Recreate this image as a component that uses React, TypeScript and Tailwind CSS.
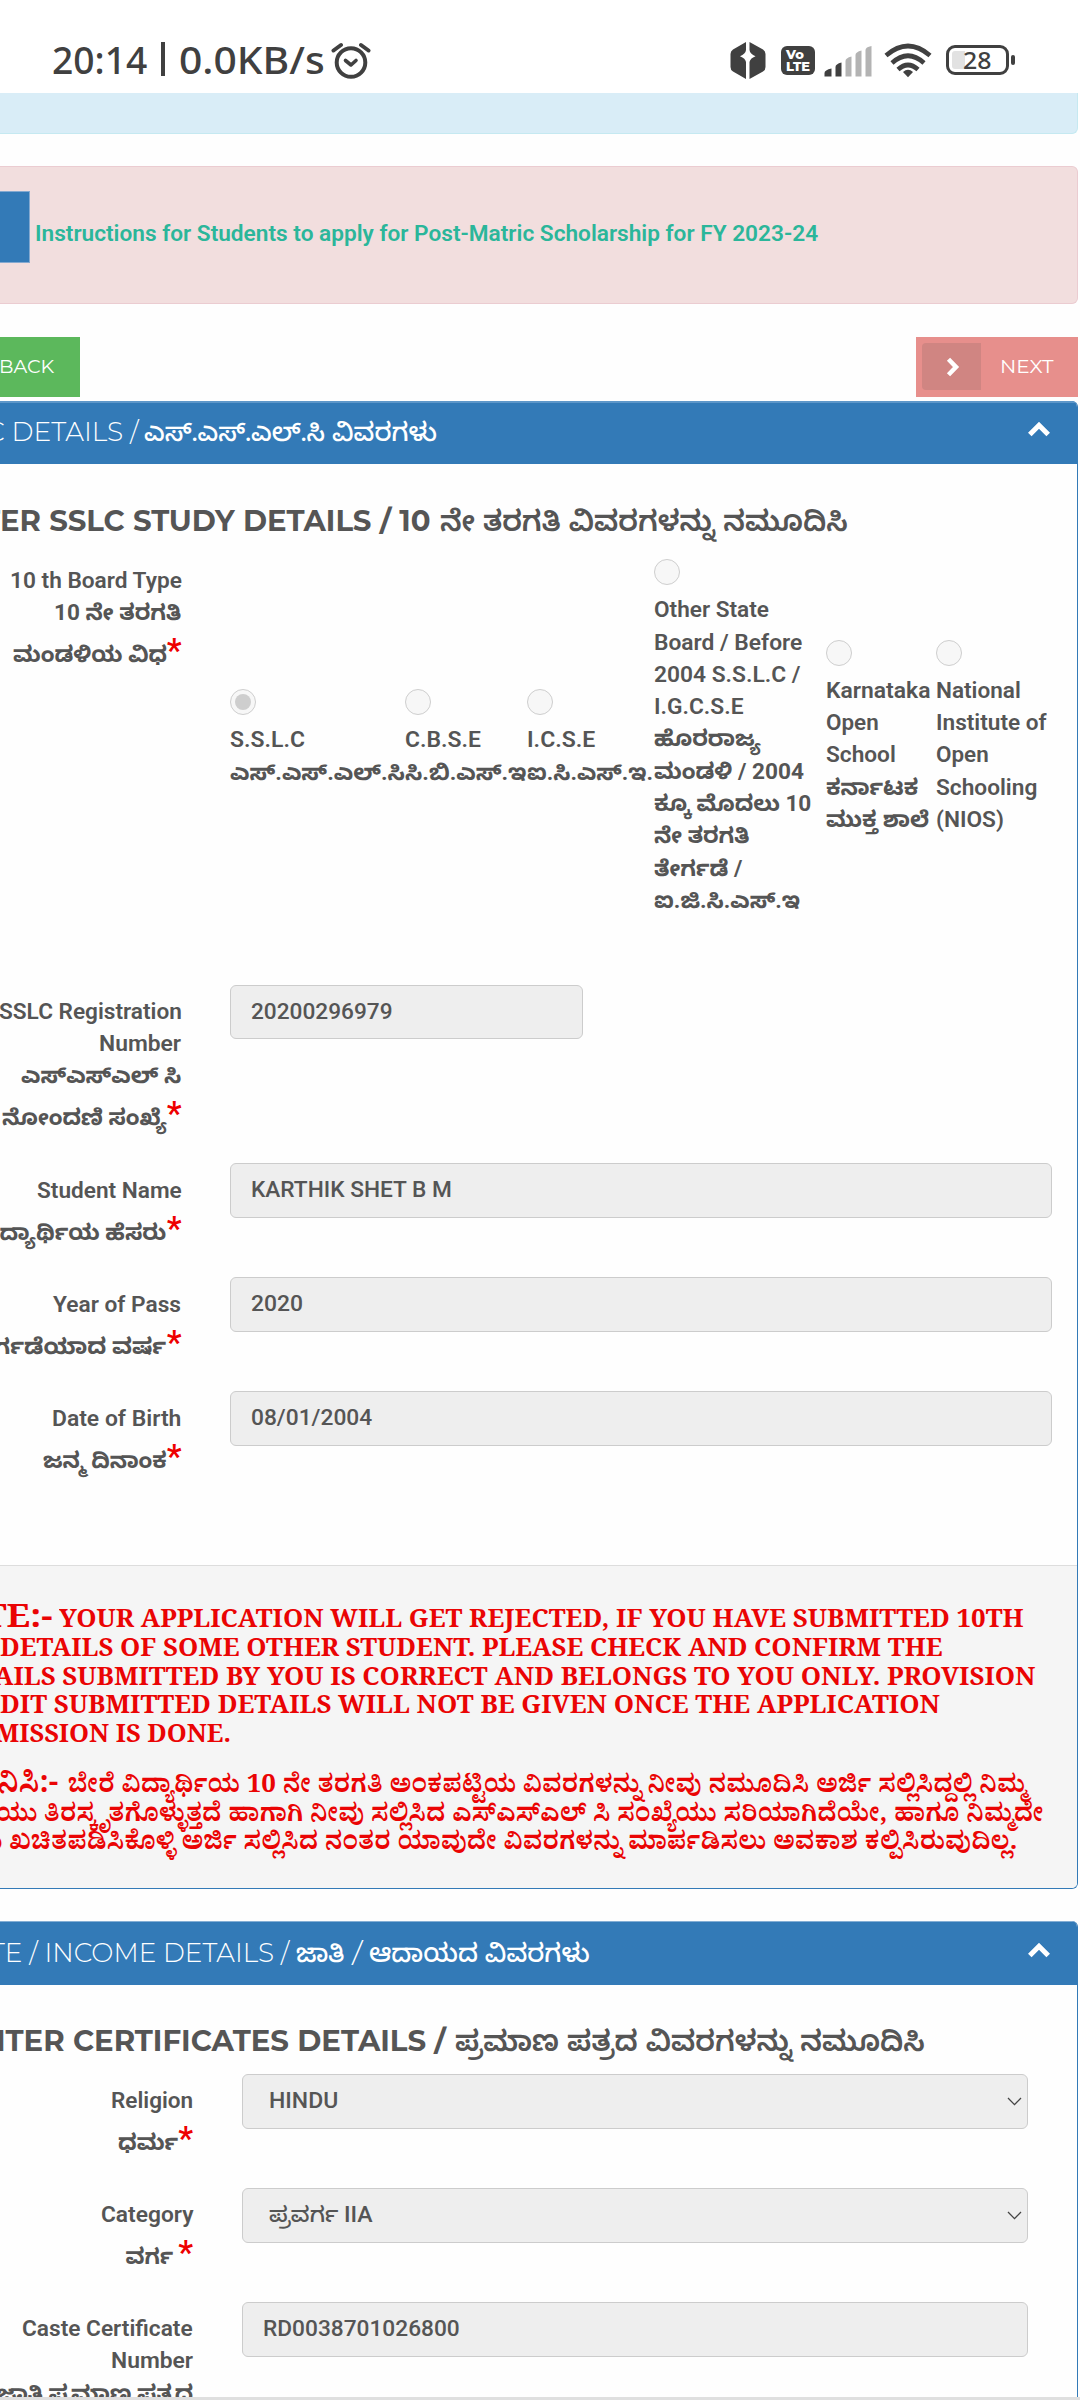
import { useLayoutEffect, useRef, useState } from 'react';
import type { ReactNode } from 'react';

/** A single line of text, stretched or squeezed horizontally to a known measure. */
function Fit({ w, className = '', right = false, children }: { w: number; className?: string; right?: boolean; children: ReactNode }) {
  const ref = useRef<HTMLSpanElement>(null);
  const [natural, setNatural] = useState(0);
  useLayoutEffect(() => {
    if (ref.current) setNatural(ref.current.offsetWidth);
  }, []);
  const style = natural
    ? right
      ? { transform: `scaleX(${w / natural})`, marginLeft: w - natural }
      : { transform: `scaleX(${w / natural})`, marginRight: w - natural }
    : undefined;
  return (
    <span ref={ref} style={style} className={`inline-block shrink-0 whitespace-pre ${right ? 'origin-right' : 'origin-left'} ${className}`}>
      {children}
    </span>
  );
}

function StatusBar() {
  return (
    <div className="flex h-[93px] shrink-0 items-start bg-white text-[#404040]">
      <div className="flex h-[40px] mt-[39px] ml-[52px] items-center text-[38px] leading-[40px] font-medium font-['Noto_Sans','Open_Sans',sans-serif]">
        <Fit w={95}>20:14</Fit>
        <div className="ml-[14px] h-[34px] w-[4px] bg-[#404040]" />
        <Fit w={146} className="ml-[14px]">0.0KB/s</Fit>
      </div>
      <svg className="mt-[41px] ml-[6px]" width="40" height="40" viewBox="0 0 40 40" fill="none" stroke="#404040" strokeLinecap="round">
        <circle cx="20" cy="21.5" r="14.3" strokeWidth="4" />
        <path d="M2.5 9.5 L10 4 M37.5 9.5 L30 4" strokeWidth="4" />
        <path d="M14.5 19.5 L20 24 L25 19.5" strokeWidth="3.6" strokeLinejoin="round" />
      </svg>
      <div className="ml-[359px] mt-[42px] flex items-start">
        <svg width="36" height="37" viewBox="0 0 36 37" fill="#404040">
          <path d="M16 0 L3 7.5 Q0.5 9 0.5 12 V25 Q0.5 28 3 29.5 L16 37 V20 Q15.5 16.5 10 14.2 Q15.5 12 16 8Z" />
          <path d="M19.5 0 L33 7.5 Q35.5 9 35.5 12 V25 Q35.5 28 33 29.5 L19.5 37 V20 Q20 16.5 25.5 14.2 Q20 12 19.5 8Z" />
        </svg>
        <div className="ml-[15px] mt-[4px] h-[29px] w-[34px] rounded-[6px] bg-[#404040] pt-[3px] pl-[5px] font-['Montserrat','Inter',sans-serif] text-[13px] leading-[11.5px] font-extrabold text-white">
          <div className="h-[11.5px]"><Fit w={18}>Vo</Fit></div>
          <div className="h-[12px]"><Fit w={24}>LTE</Fit></div>
        </div>
        <svg className="ml-[9px] mt-[4px]" width="49" height="31" viewBox="0 0 49 31">
          <path d="M0.5 30.5V27Q0.5 24 7.5 22.5V30.5Z" fill="#404040" />
          <path d="M11.5 30.5V21Q11.5 18 17.5 16.5V30.5Z" fill="#404040" />
          <path d="M21.5 30.5V15Q21.5 12 27.5 10.5V30.5Z" fill="#b3b3b3" />
          <path d="M31.5 30.5V9Q31.5 6 37.5 4.5V30.5Z" fill="#b3b3b3" />
          <path d="M41.5 30.5V4Q41.5 1 47.5 0V30.5Z" fill="#b3b3b3" />
        </svg>
        <svg className="ml-[11px] mt-[1px]" width="48" height="35" viewBox="0 0 48 35" fill="none" stroke="#404040" strokeWidth="4.6">
          <path d="M2 12.5Q24 -6.5 46 12.5" />
          <path d="M8 20Q24 5.5 40 20" />
          <path d="M14 26.5Q24 17.5 34 26.5" />
          <path d="M19 29Q24 24.5 29 29L24 34.3Z" fill="#404040" stroke="none" />
        </svg>
        <div className="relative ml-[14px] mt-[3px] flex h-[30px] w-[63px] items-center rounded-[9px] border-[3px] border-[#404040]">
          <div className="ml-[3px] h-[18px] w-[13px] rounded-l-[3px] bg-[#e2e2e2]" />
          <div className="absolute left-[14px] top-0 font-['Noto_Sans',sans-serif] text-[24px] leading-[24px]"><Fit w={28}>28</Fit></div>
        </div>
        <div className="ml-[2px] mt-[13px] h-[10px] w-[4px] rounded-[2px] bg-[#404040]" />
      </div>
    </div>
  );
}

function Chevron({ className }: { className: string }) {
  return (
    <svg className={className} width="22" height="16" viewBox="0 0 22 16" fill="none" stroke="white" strokeWidth="5">
      <path d="M1.8 13.5L11 4.2L20.2 13.5" />
    </svg>
  );
}

function Star() {
  return <span className="text-[33px] leading-[0] font-semibold text-[#ee0000]">*</span>;
}

function LabelLine({ w, star = false, gap = false, children }: { w: number; star?: boolean; gap?: boolean; children: string }) {
  const kannada = /[\u0C80-\u0CFF]/.test(children);
  return (
    <div className={`flex h-[32.3px] items-baseline justify-end leading-[32px] ${star ? 'mt-[9.5px]' : ''}`}>
      <Fit w={w} right className={kannada ? 'font-bold' : 'font-semibold'}>{children}</Fit>
      {gap && <span className="w-[5px]" />}
      {star && <Star />}
    </div>
  );
}

function Input({ w, className = '', children }: { w: number; className?: string; children: ReactNode }) {
  return (
    <div className={`flex h-[54.5px] shrink-0 items-center rounded-[6px] border border-[#ccc] bg-[#eee] ${className}`}>
      <Fit w={w} className="leading-[52px]">{children}</Fit>
    </div>
  );
}

function DownMark() {
  return (
    <svg className="ml-auto mr-[5px]" width="15" height="9" viewBox="0 0 15 9" fill="none" stroke="#444" strokeWidth="1.3">
      <path d="M1 1L7.5 7.6L14 1" />
    </svg>
  );
}

function Option({ className, checked = false, lines }: { className: string; checked?: boolean; lines: [string, number][] }) {
  return (
    <div className={`shrink-0 ${className}`}>
      <div className="flex size-[26px] items-center justify-center rounded-full border-[1.5px] border-[#cecece] bg-[#f7f7f7]">
        {checked && <div className="size-[16px] rounded-full bg-[#cecece]" />}
      </div>
      <div className="mt-[9.3px]">
        {lines.map(([text, w]) => (
          <div key={text} className="h-[32.3px] leading-[32px]">
            <Fit w={w} className={/[\u0C80-\u0CFF]/.test(text) ? 'font-bold' : 'font-semibold'}>{text}</Fit>
          </div>
        ))}
      </div>
    </div>
  );
}

const roboto = "font-['Roboto','Noto_Sans_Kannada',sans-serif]";

export default function App() {
  return (
    <div className={`flex h-[2400px] w-[1080px] flex-col overflow-hidden bg-[#fefefe] text-[22px] font-medium text-[#555] ${roboto}`}>
      <StatusBar />

      <div className="mr-[2px] h-[41px] shrink-0 rounded-br-[6px] border-r border-b border-[#c5e9f1] bg-[#d9edf7]" />

      <div className="mt-[32px] mr-[2px] flex h-[138px] shrink-0 rounded-r-[6px] border border-l-0 border-[#ebccd1] bg-[#f2dede]">
        <div className="mt-[24px] h-[72px] w-[30px] border border-l-0 border-[#84a9d0] bg-[#337ab7]" />
        <div className="ml-[5px] mt-[51px] h-[32px] leading-[32px] text-[#2bb69a]">
          <Fit w={783} className="font-semibold">Instructions for Students to apply for Post-Matric Scholarship for FY 2023-24</Fit>
        </div>
      </div>

      <div className="mt-[33px] mr-[2px] flex h-[60px] shrink-0 justify-between font-['Montserrat','Inter',sans-serif] text-[18.5px] font-normal text-white">
        <div className="w-[80px] bg-[#5cb85c] leading-[59px]"><Fit w={55} className="-ml-px">BACK</Fit></div>
        <div className="flex w-[162px] bg-[#e78f8c] p-[6px]">
          <div className="flex h-[47px] w-[59px] items-center justify-center rounded-l-[4px] bg-[#d08582] pl-[2px]">
            <svg width="14" height="20" viewBox="0 0 14 20" fill="none" stroke="white" strokeWidth="4.5"><path d="M2.5 2.3L10 10L2.5 17.7" /></svg>
          </div>
          <Fit w={53} className="ml-[19px] leading-[48px]">NEXT</Fit>
        </div>
      </div>

      <section className="mt-[4px] mr-[2px] flex h-[1488px] shrink-0 flex-col overflow-hidden rounded-r-[6px] border-r border-b border-[#337ab7]">
        <div className="flex h-[63px] shrink-0 border-t-2 border-[#5e97c9] bg-[#337ab7] text-[26px] leading-[58px] font-[350] text-white font-['Montserrat','Noto_Sans_Kannada','Inter',sans-serif]">
          <Fit w={152} className="-ml-[14px]">C DETAILS /</Fit>
          <Fit w={293} className="ml-[6px] font-medium">ಎಸ್.ಎಸ್.ಎಲ್.ಸಿ ವಿವರಗಳು</Fit>
          <Chevron className="mt-[18px] mr-[27px] ml-auto" />
        </div>

        <div className="mt-[37px] flex h-[40px] shrink-0 text-[29px] leading-[40px] font-bold font-['Montserrat','Noto_Sans_Kannada','Inter',sans-serif]">
          <Fit w={449} className="-ml-[18px]">TER SSLC STUDY DETAILS / 10</Fit>
          <Fit w={408} className="ml-[9px] font-semibold">ನೇ ತರಗತಿ ವಿವರಗಳನ್ನು ನಮೂದಿಸಿ</Fit>
        </div>

        <div className="flex h-[443.5px] shrink-0">
          <div className="w-[181.5px] shrink-0 pt-[24px]">
            <LabelLine w={172}>10 th Board Type</LabelLine>
            <LabelLine w={127}>10 ನೇ ತರಗತಿ</LabelLine>
            <LabelLine w={154} star>ಮಂಡಳಿಯ ವಿಧ</LabelLine>
          </div>
          <div className="ml-[48.5px] flex">
            <Option className="w-[175px] pt-[148px]" checked lines={[['S.S.L.C', 75], ['ಎಸ್.ಎಸ್.ಎಲ್.ಸಿ', 175]]} />
            <Option className="w-[122px] pt-[148px]" lines={[['C.B.S.E', 76], ['ಸಿ.ಬಿ.ಎಸ್.ಇ', 122]]} />
            <Option className="w-[127px] pt-[148px]" lines={[['I.C.S.E', 68], ['ಐ.ಸಿ.ಎಸ್.ಇ.', 126]]} />
            <Option
              className="w-[172px] pt-[18px]"
              lines={[['Other State', 115], ['Board / Before', 148], ['2004 S.S.L.C /', 146], ['I.G.C.S.E', 90], ['ಹೊರರಾಜ್ಯ', 107], ['ಮಂಡಳಿ / 2004', 150], ['ಕ್ಕೂ ಮೊದಲು 10', 157], ['ನೇ ತರಗತಿ', 96], ['ತೇರ್ಗಡೆ /', 88], ['ಐ.ಜಿ.ಸಿ.ಎಸ್.ಇ', 146]]}
            />
            <Option className="w-[110px] pt-[98.5px]" lines={[['Karnataka', 104], ['Open', 53], ['School', 70], ['ಕರ್ನಾಟಕ', 92], ['ಮುಕ್ತ ಶಾಲೆ', 103]]} />
            <Option className="w-[112px] pt-[98.5px]" lines={[['National', 85], ['Institute of', 111], ['Open', 53], ['Schooling', 101], ['(NIOS)', 68]]} />
          </div>
        </div>

        <div className="flex h-[178.5px] shrink-0">
          <div className="w-[181.5px] shrink-0 pt-[11px]">
            <LabelLine w={183}>SSLC Registration</LabelLine>
            <LabelLine w={82}>Number</LabelLine>
            <LabelLine w={160}>ಎಸ್‌ಎಸ್‌ಎಲ್ ಸಿ</LabelLine>
            <LabelLine w={165} star>ನೋಂದಣಿ ಸಂಖ್ಯೆ</LabelLine>
          </div>
          <Input w={142} className="ml-[48.5px] w-[353px] pl-[19.5px]">20200296979</Input>
        </div>
        <div className="flex h-[114px] shrink-0">
          <div className="w-[181.5px] shrink-0 pt-[12px]">
            <LabelLine w={145}>Student Name</LabelLine>
            <LabelLine w={187} star>ವಿದ್ಯಾರ್ಥಿಯ ಹೆಸರು</LabelLine>
          </div>
          <Input w={201} className="ml-[48.5px] w-[822px] pl-[19.5px]">KARTHIK SHET B M</Input>
        </div>
        <div className="flex h-[114px] shrink-0">
          <div className="w-[181.5px] shrink-0 pt-[12px]">
            <LabelLine w={128}>Year of Pass</LabelLine>
            <LabelLine w={199} star>ತೇರ್ಗಡೆಯಾದ ವರ್ಷ</LabelLine>
          </div>
          <Input w={52} className="ml-[48.5px] w-[822px] pl-[19.5px]">2020</Input>
        </div>
        <div className="flex h-[114px] shrink-0">
          <div className="w-[181.5px] shrink-0 pt-[12px]">
            <LabelLine w={129}>Date of Birth</LabelLine>
            <LabelLine w={124} star>ಜನ್ಮ ದಿನಾಂಕ</LabelLine>
          </div>
          <Input w={121} className="ml-[48.5px] w-[822px] pl-[19.5px]">08/01/2004</Input>
        </div>

        <div className="mt-auto flex h-[323px] shrink-0 flex-col border-t border-[#ddd] bg-[#f5f5f5] pt-[37px] text-[25px] font-bold text-[#ea0404] font-['Noto_Serif','Liberation_Serif','Noto_Serif_Kannada',serif]">
          <div className="flex h-[29px] items-baseline leading-[29px]">
            <Fit w={69} className="-ml-[17px] text-[33px] leading-[0]">TE:-</Fit>
            <Fit w={965} className="ml-[7px]">YOUR APPLICATION WILL GET REJECTED, IF YOU HAVE SUBMITTED 10TH</Fit>
          </div>
          <div className="h-[28.7px] leading-[29px]"><Fit w={943}>DETAILS OF SOME OTHER STUDENT. PLEASE CHECK AND CONFIRM THE</Fit></div>
          <div className="h-[28.7px] leading-[29px]"><Fit w={1041} className="-ml-[6px]">AILS SUBMITTED BY YOU IS CORRECT AND BELONGS TO YOU ONLY. PROVISION</Fit></div>
          <div className="h-[28.7px] leading-[29px]"><Fit w={940} className="ml-0">DIT SUBMITTED DETAILS WILL NOT BE GIVEN ONCE THE APPLICATION</Fit></div>
          <div className="h-[28.7px] leading-[29px]"><Fit w={236} className="-ml-[5px]">MISSION IS DONE.</Fit></div>
          <div className="mt-[21px] flex h-[29px] items-baseline leading-[29px]">
            <Fit w={60} className="-ml-[2px] text-[31px] leading-[0]">ನಿಸಿ:-</Fit>
            <Fit w={958} className="ml-[10px]">ಬೇರೆ ವಿದ್ಯಾರ್ಥಿಯ 10 ನೇ ತರಗತಿ ಅಂಕಪಟ್ಟಿಯ ವಿವರಗಳನ್ನು ನೀವು ನಮೂದಿಸಿ ಅರ್ಜಿ ಸಲ್ಲಿಸಿದ್ದಲ್ಲಿ ನಿಮ್ಮ</Fit>
          </div>
          <div className="h-[28.5px] leading-[29px]"><Fit w={1048} className="-ml-[4px]">ಯು ತಿರಸ್ಕೃತಗೊಳ್ಳುತ್ತದೆ ಹಾಗಾಗಿ ನೀವು ಸಲ್ಲಿಸಿದ ಎಸ್‌ಎಸ್‌ಎಲ್ ಸಿ ಸಂಖ್ಯೆಯು ಸರಿಯಾಗಿದೆಯೇ, ಹಾಗೂ ನಿಮ್ಮದೇ</Fit></div>
          <div className="h-[28.5px] leading-[29px]"><Fit w={1040} className="-ml-[23px]">ರು ಖಚಿತಪಡಿಸಿಕೊಳ್ಳಿ ಅರ್ಜಿ ಸಲ್ಲಿಸಿದ ನಂತರ ಯಾವುದೇ ವಿವರಗಳನ್ನು ಮಾರ್ಪಡಿಸಲು ಅವಕಾಶ ಕಲ್ಪಿಸಿರುವುದಿಲ್ಲ.</Fit></div>
        </div>
      </section>

      <section className="mt-[32px] mr-[2px] flex h-[476px] shrink-0 flex-col overflow-hidden rounded-tr-[6px] border-r border-[#337ab7]">
        <div className="flex h-[64px] shrink-0 border-t border-[#84aed4] bg-[#337ab7] text-[26px] leading-[62px] font-[350] text-white font-['Montserrat','Noto_Sans_Kannada','Inter',sans-serif]">
          <Fit w={299} className="-ml-[10px]">TE / INCOME DETAILS /</Fit>
          <Fit w={48} className="ml-[7px] font-medium">ಜಾತಿ</Fit>
          <Fit w={10} className="ml-[7px]">/</Fit>
          <Fit w={221} className="ml-[7px] font-medium">ಆದಾಯದ ವಿವರಗಳು</Fit>
          <Chevron className="mt-[20px] mr-[27px] ml-auto" />
        </div>
        <div className="mt-[36px] flex h-[40px] shrink-0 text-[29px] leading-[40px] font-bold font-['Montserrat','Noto_Sans_Kannada','Inter',sans-serif]">
          <Fit w={464} className="-ml-[18px]">NTER CERTIFICATES DETAILS /</Fit>
          <Fit w={470} className="ml-[9px] font-semibold">ಪ್ರಮಾಣ ಪತ್ರದ ವಿವರಗಳನ್ನು ನಮೂದಿಸಿ</Fit>
        </div>
        <div className="mt-[13px] flex h-[114px] shrink-0">
          <div className="w-[193px] shrink-0 pt-[11px]">
            <LabelLine w={82}>Religion</LabelLine>
            <LabelLine w={60} star>ಧರ್ಮ</LabelLine>
          </div>
          <div className="ml-[49px] flex h-[54.5px] w-[786px] items-center rounded-[6px] border border-[#ccc] bg-[#eee] pl-[26px]">
            <Fit w={69} className="leading-[52px]">HINDU</Fit>
            <DownMark />
          </div>
        </div>
        <div className="flex h-[114px] shrink-0">
          <div className="w-[193px] shrink-0 pt-[11px]">
            <LabelLine w={92}>Category</LabelLine>
            <LabelLine w={48} star gap>ವರ್ಗ</LabelLine>
          </div>
          <div className="ml-[49px] flex h-[54.5px] w-[786px] items-center rounded-[6px] border border-[#ccc] bg-[#eee] pl-[26px]">
            <Fit w={104} className="leading-[52px]">ಪ್ರವರ್ಗ IIA</Fit>
            <DownMark />
          </div>
        </div>
        <div className="flex h-[95px] shrink-0 overflow-hidden">
          <div className="w-[193px] shrink-0 pt-[11px]">
            <LabelLine w={171}>Caste Certificate</LabelLine>
            <LabelLine w={82}>Number</LabelLine>
            <LabelLine w={196}>ಜಾತಿ ಪ್ರಮಾಣ ಪತ್ರದ</LabelLine>
          </div>
          <Input w={197} className="ml-[49px] w-[786px] pl-[20px]">RD0038701026800</Input>
        </div>
      </section>
      <div className="h-[3px] shrink-0 bg-[#dfdfdf]" />
    </div>
  );
}
